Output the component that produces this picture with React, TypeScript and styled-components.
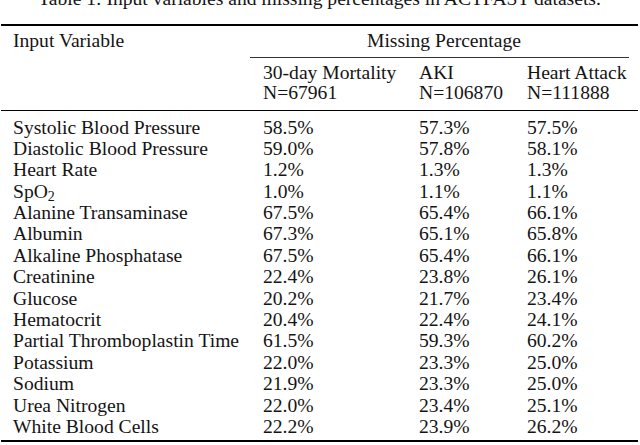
import React from "react";
import styled, { createGlobalStyle } from "styled-components";

const GlobalStyle = createGlobalStyle`
  html, body {
    margin: 0;
    padding: 0;
    background: #ffffff;
    overflow: hidden;
  }
  body {
    font-family: "Liberation Serif", "Times New Roman", serif;
    color: #141414;
  }
`;

const Page = styled.div`
  width: 637px;
  padding-left: 1px;
  font-size: 19.6px;
`;

const Caption = styled.div`
  margin-top: -12px;
  margin-bottom: 14.6px;
  line-height: 21.4px;
  text-align: center;
  white-space: nowrap;
`;

const Table = styled.div`
  border-top: 2px solid #000;
  border-bottom: 2px solid #000;
`;

const COLS = "249px 156px 108px 124px";

const Header = styled.div`
  display: grid;
  grid-template-columns: ${COLS};
  grid-template-rows: auto auto;
  padding-top: 4px;
  padding-bottom: 7.5px;
  border-bottom: 1px solid #000;
`;

const VarHead = styled.div`
  grid-column: 1;
  grid-row: 1;
  padding-left: 12px;
  line-height: 21.4px;
`;

const GroupHead = styled.div`
  grid-column: 2 / span 3;
  grid-row: 1;
  line-height: 21.4px;
  text-align: center;
`;

const CmidRule = styled.div`
  margin-top: 5.6px;
  margin-right: 9px;
  height: 1px;
  background: #333;
`;

const SubHead = styled.div<{ $col: number }>`
  grid-column: ${(p) => p.$col};
  grid-row: 2;
  padding-top: 4.5px;
  padding-left: 13px;
  line-height: 20px;
  white-space: nowrap;
`;

const Body = styled.div`
  padding-top: 5.5px;
  padding-bottom: 2.5px;
`;

const Row = styled.div`
  display: grid;
  grid-template-columns: ${COLS};
  height: 21.4px;
  line-height: 21.4px;
  white-space: nowrap;
`;

const Cell = styled.div<{ $first?: boolean }>`
  padding-left: ${(p) => (p.$first ? "12px" : "13px")};
`;

const Sub = styled.span`
  font-size: 14px;
  line-height: 0;
  vertical-align: -3px;
`;

type RowData = [React.ReactNode, string, string, string];

const rows: RowData[] = [
  ["Systolic Blood Pressure", "58.5%", "57.3%", "57.5%"],
  ["Diastolic Blood Pressure", "59.0%", "57.8%", "58.1%"],
  ["Heart Rate", "1.2%", "1.3%", "1.3%"],
  [
    <>
      SpO<Sub>2</Sub>
    </>,
    "1.0%",
    "1.1%",
    "1.1%",
  ],
  ["Alanine Transaminase", "67.5%", "65.4%", "66.1%"],
  ["Albumin", "67.3%", "65.1%", "65.8%"],
  ["Alkaline Phosphatase", "67.5%", "65.4%", "66.1%"],
  ["Creatinine", "22.4%", "23.8%", "26.1%"],
  ["Glucose", "20.2%", "21.7%", "23.4%"],
  ["Hematocrit", "20.4%", "22.4%", "24.1%"],
  ["Partial Thromboplastin Time", "61.5%", "59.3%", "60.2%"],
  ["Potassium", "22.0%", "23.3%", "25.0%"],
  ["Sodium", "21.9%", "23.3%", "25.0%"],
  ["Urea Nitrogen", "22.0%", "23.4%", "25.1%"],
  ["White Blood Cells", "22.2%", "23.9%", "26.2%"],
];

export default function App() {
  return (
    <>
      <GlobalStyle />
      <Page>
        <Caption>
          Table 1: Input variables and missing percentages in ACTFAST datasets.
        </Caption>
        <Table>
          <Header>
            <VarHead>Input Variable</VarHead>
            <GroupHead>
              Missing Percentage
              <CmidRule />
            </GroupHead>
            <SubHead $col={2}>
              30-day Mortality
              <br />
              N=67961
            </SubHead>
            <SubHead $col={3}>
              AKI
              <br />
              N=106870
            </SubHead>
            <SubHead $col={4}>
              Heart Attack
              <br />
              N=111888
            </SubHead>
          </Header>
          <Body>
            {rows.map((r, i) => (
              <Row key={i}>
                <Cell $first>{r[0]}</Cell>
                <Cell>{r[1]}</Cell>
                <Cell>{r[2]}</Cell>
                <Cell>{r[3]}</Cell>
              </Row>
            ))}
          </Body>
        </Table>
      </Page>
    </>
  );
}
